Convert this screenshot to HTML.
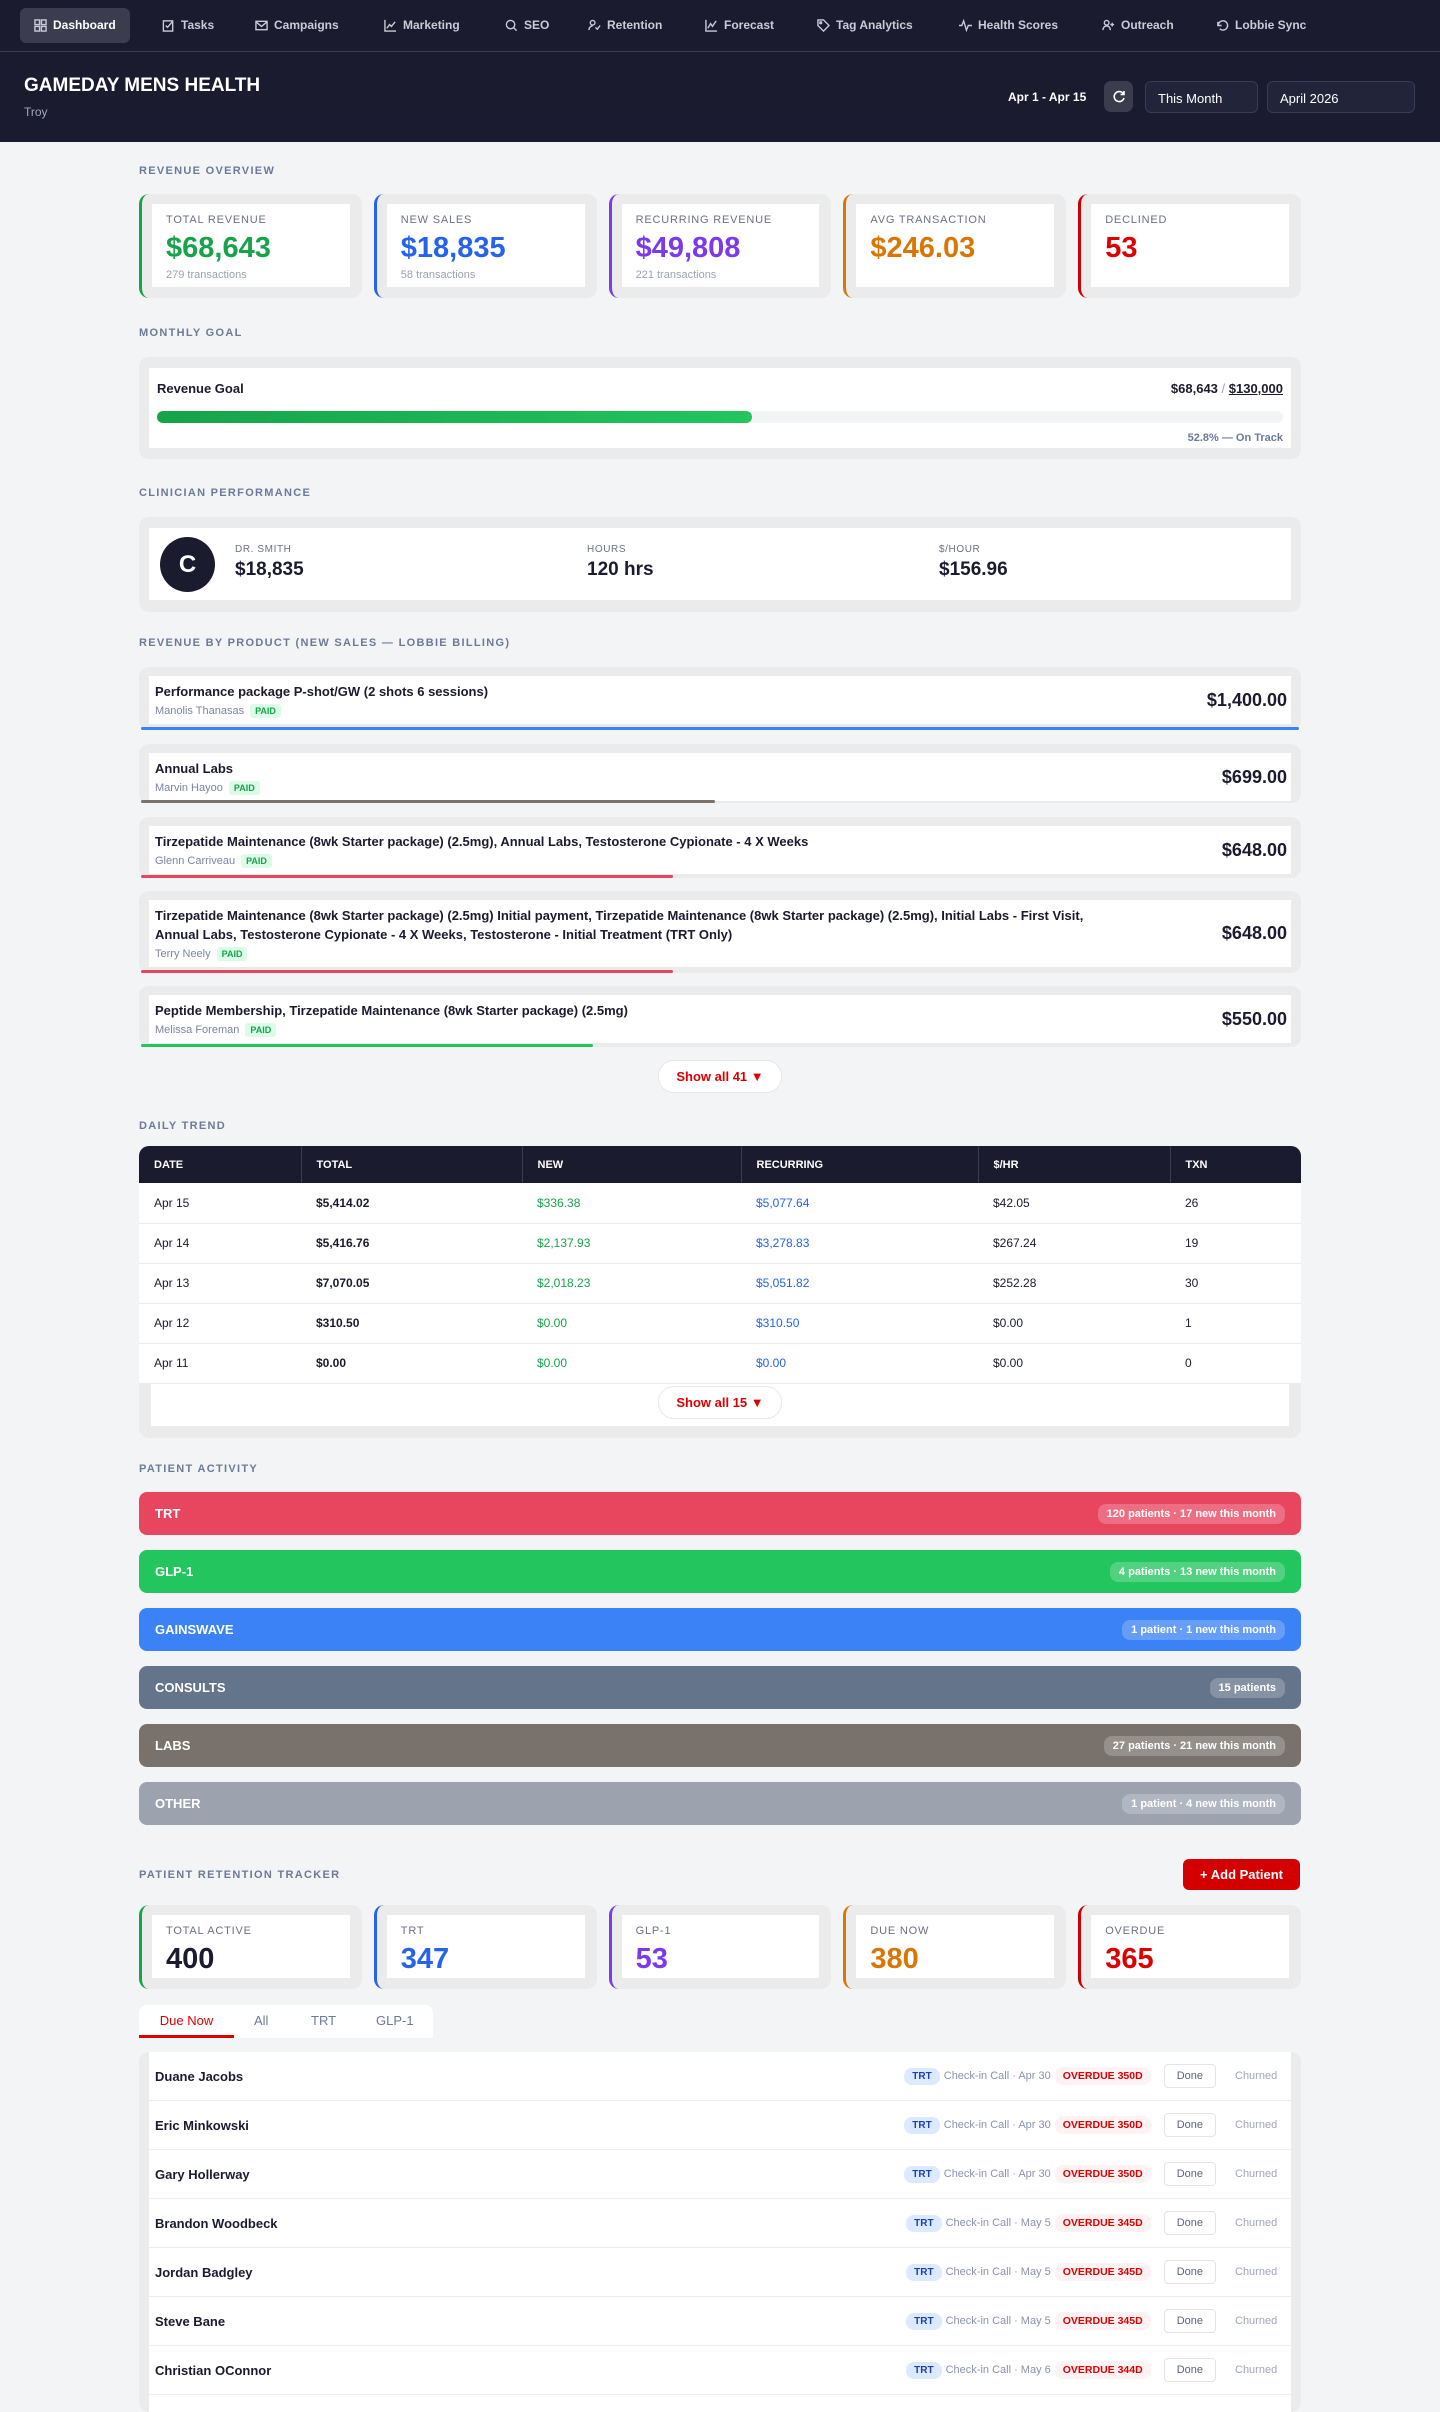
<!DOCTYPE html>
<html><head><meta charset="utf-8"><style>
*{box-sizing:border-box;margin:0;padding:0}
body{width:1440px;height:2400px;background:#f3f4f6;font-family:"Liberation Sans",Arial,sans-serif;color:#1a1b2e;position:relative;overflow:hidden}
.nav{position:absolute;left:0;top:0;width:1440px;height:52px;background:#1a1b2e;border-bottom:1px solid #3a3c50}
.ni{position:absolute;top:8px;height:35px;line-height:35px;font-size:12px;font-weight:bold;color:#c9cbd8;display:flex;align-items:center;gap:6px}
.ni svg{width:13px;height:13px;stroke:#c9cbd8;fill:none;stroke-width:1.5}
.ni.act{background:#3b3c4e;border-radius:6px;padding:0 14px;color:#fff}
.hdr{position:absolute;left:0;top:52px;width:1440px;height:90px;background:#1a1b2e}
.ttl{position:absolute;left:24px;top:23px;font-size:19px;font-weight:bold;color:#fff}
.sub{position:absolute;left:24px;top:53px;font-size:12px;color:#a3a6b8}
.lab{position:absolute;left:139px;font-size:11px;font-weight:bold;letter-spacing:1.3px;color:#6b7a99}
.sec{position:absolute;left:139px;width:1162px}
.card{background:#ebebeb;border-radius:10px;padding:10px 10px 10px 13px}
.in{background:#fff}
.stats{display:flex;gap:12px}
.st{flex:1;height:104px;background:#ebebeb;border-radius:10px;border-left:3px solid;padding:10px 12px 11px 10px}
.st .in{height:83px;padding:10px 14px}
.st .l{font-size:11px;color:#6b7280;letter-spacing:.8px;font-weight:500}
.st .v{font-size:29px;font-weight:bold;margin-top:6px;line-height:32px}
.st .s{font-size:11px;color:#9ca3af;margin-top:5px}
.prow{position:absolute;left:0;width:1162px;background:#ebebeb;border-radius:10px;padding:9px 10px 10px 10px}
.prow .in{display:flex;justify-content:space-between;align-items:center;padding:6px 4px 6px 6px}
.pt{font-size:13px;font-weight:bold;line-height:19px}
.pn{font-size:11px;color:#7c86a2;margin-top:3px}
.paid{display:inline-block;background:#dcfce7;color:#16a34a;font-size:9px;font-weight:bold;padding:2px 5px;border-radius:3px;margin-left:6px}
.pp{font-size:18px;font-weight:bold}
.pbar{position:absolute;left:2px;bottom:0;height:3px;border-radius:2px}
.btn{position:absolute;background:#fff;border-radius:16px;color:#d00;font-size:13px;font-weight:bold;text-align:center;border:1px solid #e5e7eb}
table{border-collapse:collapse;width:100%}
th{background:#1a1b2e;color:#fff;font-size:11px;text-align:left;height:37px;padding-left:15px;border-left:1px solid #3a3c50}
td{height:40px;font-size:12px;padding-left:15px;background:#fff;border-bottom:1px solid #ececec}
.pa{position:absolute;left:139px;width:1162px;height:43px;border-radius:8px;color:#fff;font-size:13px;font-weight:bold;padding:0 16px;display:flex;justify-content:space-between;align-items:center}
.pa span{background:rgba(255,255,255,.22);font-size:11px;padding:4px 9px;border-radius:8px;font-weight:bold}
.lr{height:49px;border-bottom:1px solid #ececec;display:flex;align-items:center;justify-content:space-between;padding:0 8px 0 6px;background:#fff}
.lr .n{font-size:13px;font-weight:bold}
.rt{display:flex;align-items:center;font-size:11px;color:#8a93ad}
.trt{background:#dbeafe;color:#1e40af;font-weight:bold;font-size:10px;padding:3px 8px;border-radius:8px;margin-right:4px}
.ov{background:#fef2f2;color:#dc0000;font-weight:bold;font-size:10.5px;padding:3px 8px;border-radius:8px;margin-left:4px}
.dn{border:1px solid #e2e4ea;border-radius:4px;padding:5px 12px;color:#5a6480;margin-left:13px;font-size:11px}
.ch{color:#a0a6b8;margin-left:19px;width:48px}
</style></head><body>
<div class="nav">
<div class="ni act" style="left:20px"><svg viewBox="0 0 14 14"><rect x="1" y="1" width="5" height="5"/><rect x="8" y="1" width="5" height="5"/><rect x="1" y="8" width="5" height="5"/><rect x="8" y="8" width="5" height="5"/></svg>Dashboard</div>
<div class="ni" style="left:162px"><svg viewBox="0 0 14 14"><rect x="1.5" y="2" width="10" height="11"/><path d="M4 7l2 2 5-6"/></svg>Tasks</div>
<div class="ni" style="left:255px"><svg viewBox="0 0 14 14"><rect x="1" y="2.5" width="12" height="9"/><path d="M1 3l6 5 6-5"/></svg>Campaigns</div>
<div class="ni" style="left:384px"><svg viewBox="0 0 14 14"><path d="M1 1v12h12M3 10l3-4 2 2 4-5"/></svg>Marketing</div>
<div class="ni" style="left:505px"><svg viewBox="0 0 14 14"><circle cx="6" cy="6" r="4.5"/><path d="M9.5 9.5l3 3"/></svg>SEO</div>
<div class="ni" style="left:588px"><svg viewBox="0 0 14 14"><circle cx="5" cy="4" r="2.5"/><path d="M1 12c0-3 2-4.5 4-4.5M8 9l2 2 3-4"/></svg>Retention</div>
<div class="ni" style="left:705px"><svg viewBox="0 0 14 14"><path d="M1 1v12h12M3 10l3-5 2 3 4-6"/></svg>Forecast</div>
<div class="ni" style="left:817px"><svg viewBox="0 0 14 14"><path d="M1 1h6l6 6-6 6-6-6z"/><circle cx="4" cy="4" r="1"/></svg>Tag Analytics</div>
<div class="ni" style="left:959px"><svg viewBox="0 0 14 14"><path d="M0 7h3l2-5 3 10 2-5h4"/></svg>Health Scores</div>
<div class="ni" style="left:1102px"><svg viewBox="0 0 14 14"><circle cx="5" cy="4" r="2.5"/><path d="M1 12c0-3 2-4.5 4-4.5s4 1.5 4 4.5M11 4v4M9 6h4"/></svg>Outreach</div>
<div class="ni" style="left:1216px"><svg viewBox="0 0 14 14"><path d="M2 3v4h4M2.5 7A5 5 0 1 1 4 10.5"/></svg>Lobbie Sync</div>
</div>
<div class="hdr">
<div class="ttl">GAMEDAY MENS HEALTH</div>
<div class="sub">Troy</div>
<div style="position:absolute;left:1008px;top:38px;font-size:12px;font-weight:bold;color:#fff">Apr 1 - Apr 15</div>
<div style="position:absolute;left:1104px;top:29px;width:29px;height:31px;background:#3b3c4e;border-radius:7px;display:flex;align-items:center;justify-content:center"><svg width="14" height="14" viewBox="0 0 14 14" fill="none" stroke="#fff" stroke-width="1.6"><path d="M11.5 4A5 5 0 1 0 12 8M12 1v3.5H8.5"/></svg></div>
<div style="position:absolute;left:1145px;top:29px;width:113px;height:32px;background:#22243a;border:1px solid #3a3c55;border-radius:6px;color:#fff;font-size:13px;padding:9px 12px">This Month</div>
<div style="position:absolute;left:1267px;top:29px;width:148px;height:32px;background:#22243a;border:1px solid #3a3c55;border-radius:6px;color:#fff;font-size:13px;padding:9px 12px">April 2026</div>
</div>

<div class="lab" style="top:165px">REVENUE OVERVIEW</div>
<div class="sec stats" style="top:194px">
<div class="st" style="border-color:#16a34a"><div class="in"><div class="l">TOTAL REVENUE</div><div class="v" style="color:#16a34a">$68,643</div><div class="s">279 transactions</div></div></div>
<div class="st" style="border-color:#2563eb"><div class="in"><div class="l">NEW SALES</div><div class="v" style="color:#2563eb">$18,835</div><div class="s">58 transactions</div></div></div>
<div class="st" style="border-color:#7c3aed"><div class="in"><div class="l">RECURRING REVENUE</div><div class="v" style="color:#7c3aed">$49,808</div><div class="s">221 transactions</div></div></div>
<div class="st" style="border-color:#d97706"><div class="in"><div class="l">AVG TRANSACTION</div><div class="v" style="color:#d97706">$246.03</div></div></div>
<div class="st" style="border-color:#c00"><div class="in"><div class="l">DECLINED</div><div class="v" style="color:#d00">53</div></div></div>
</div>

<div class="lab" style="top:327px">MONTHLY GOAL</div>
<div class="sec card" style="top:357px;height:102px;padding:11px 10px"><div class="in" style="height:80px;padding:13px 8px;position:relative">
<div style="font-size:13px;font-weight:bold;display:flex;justify-content:space-between"><span>Revenue Goal</span><span>$68,643 <span style="color:#9ca3af;font-weight:normal">/</span> <u>$130,000</u></span></div>
<div style="margin-top:15px;height:12px;background:#f3f4f6;border-radius:6px"><div style="width:52.8%;height:12px;border-radius:6px;background:linear-gradient(90deg,#16a34a,#22c55e)"></div></div>
<div style="text-align:right;font-size:11px;color:#6b7a99;margin-top:9px;font-weight:bold">52.8% — On Track</div>
</div></div>

<div class="lab" style="top:487px">CLINICIAN PERFORMANCE</div>
<div class="sec card" style="top:517px;height:95px;padding:11px 10px"><div class="in" style="height:72px;position:relative">
<div style="position:absolute;left:11px;top:9px;width:55px;height:55px;border-radius:50%;background:#1a1b2e;color:#fff;font-size:24px;font-weight:bold;text-align:center;line-height:55px">C</div>
<div style="position:absolute;left:86px;top:16px"><div style="font-size:10px;color:#6b7280;letter-spacing:.6px">DR. SMITH</div><div style="font-size:19px;font-weight:bold;margin-top:4px">$18,835</div></div>
<div style="position:absolute;left:438px;top:16px"><div style="font-size:10px;color:#6b7280;letter-spacing:.6px">HOURS</div><div style="font-size:19px;font-weight:bold;margin-top:4px">120 hrs</div></div>
<div style="position:absolute;left:790px;top:16px"><div style="font-size:10px;color:#6b7280;letter-spacing:.6px">$/HOUR</div><div style="font-size:19px;font-weight:bold;margin-top:4px">$156.96</div></div>
</div></div>

<div class="lab" style="top:637px">REVENUE BY PRODUCT (NEW SALES — LOBBIE BILLING)</div>
<div class="sec" style="top:667px;height:400px">
<div class="prow" style="top:0;height:63px"><div class="in"><div><div class="pt">Performance package P-shot/GW (2 shots 6 sessions)</div><div class="pn">Manolis Thanasas<span class="paid">PAID</span></div></div><div class="pp">$1,400.00</div></div><div class="pbar" style="width:1158px;background:#3b82f6"></div></div>
<div class="prow" style="top:77px;height:59px"><div class="in"><div><div class="pt">Annual Labs</div><div class="pn">Marvin Hayoo<span class="paid">PAID</span></div></div><div class="pp">$699.00</div></div><div class="pbar" style="width:574px;background:#78716c"></div></div>
<div class="prow" style="top:150px;height:61px"><div class="in"><div><div class="pt">Tirzepatide Maintenance (8wk Starter package) (2.5mg), Annual Labs, Testosterone Cypionate - 4 X Weeks</div><div class="pn">Glenn Carriveau<span class="paid">PAID</span></div></div><div class="pp">$648.00</div></div><div class="pbar" style="width:532px;background:#e8465f"></div></div>
<div class="prow" style="top:224px;height:82px"><div class="in"><div><div class="pt">Tirzepatide Maintenance (8wk Starter package) (2.5mg) Initial payment, Tirzepatide Maintenance (8wk Starter package) (2.5mg), Initial Labs - First Visit,<br>Annual Labs, Testosterone Cypionate - 4 X Weeks, Testosterone - Initial Treatment (TRT Only)</div><div class="pn">Terry Neely<span class="paid">PAID</span></div></div><div class="pp">$648.00</div></div><div class="pbar" style="width:532px;background:#e8465f"></div></div>
<div class="prow" style="top:319px;height:61px"><div class="in"><div><div class="pt">Peptide Membership, Tirzepatide Maintenance (8wk Starter package) (2.5mg)</div><div class="pn">Melissa Foreman<span class="paid">PAID</span></div></div><div class="pp">$550.00</div></div><div class="pbar" style="width:452px;background:#22c55e"></div></div>
</div>
<div class="btn" style="left:658px;top:1060px;width:124px;height:33px;line-height:31px">Show all 41 ▼</div>

<div class="lab" style="top:1120px">DAILY TREND</div>
<div class="sec" style="top:1146px;height:292px;background:#ebebeb;border-radius:10px;overflow:hidden">
<table>
<tr><th style="width:162px;border-left:none">DATE</th><th style="width:221px">TOTAL</th><th style="width:219px">NEW</th><th style="width:237px">RECURRING</th><th style="width:192px">$/HR</th><th>TXN</th></tr>
<tr><td>Apr 15</td><td><b>$5,414.02</b></td><td style="color:#16a34a">$336.38</td><td style="color:#2563eb">$5,077.64</td><td>$42.05</td><td>26</td></tr>
<tr><td>Apr 14</td><td><b>$5,416.76</b></td><td style="color:#16a34a">$2,137.93</td><td style="color:#2563eb">$3,278.83</td><td>$267.24</td><td>19</td></tr>
<tr><td>Apr 13</td><td><b>$7,070.05</b></td><td style="color:#16a34a">$2,018.23</td><td style="color:#2563eb">$5,051.82</td><td>$252.28</td><td>30</td></tr>
<tr><td>Apr 12</td><td><b>$310.50</b></td><td style="color:#16a34a">$0.00</td><td style="color:#2563eb">$310.50</td><td>$0.00</td><td>1</td></tr>
<tr><td>Apr 11</td><td><b>$0.00</b></td><td style="color:#16a34a">$0.00</td><td style="color:#2563eb">$0.00</td><td>$0.00</td><td>0</td></tr>
</table>
<div style="margin:0 12px;height:42px;background:#fff;position:relative"><div class="btn" style="left:507px;top:2px;width:124px;height:33px;line-height:31px">Show all 15 ▼</div></div>
</div>

<div class="lab" style="top:1463px">PATIENT ACTIVITY</div>
<div class="pa" style="top:1492px;background:#e8465f">TRT<span>120 patients · 17 new this month</span></div>
<div class="pa" style="top:1550px;background:#22c55e">GLP-1<span>4 patients · 13 new this month</span></div>
<div class="pa" style="top:1608px;background:#3b82f6">GAINSWAVE<span>1 patient · 1 new this month</span></div>
<div class="pa" style="top:1666px;background:#64748b">CONSULTS<span>15 patients</span></div>
<div class="pa" style="top:1724px;background:#78716c">LABS<span>27 patients · 21 new this month</span></div>
<div class="pa" style="top:1782px;background:#9ca3af">OTHER<span>1 patient · 4 new this month</span></div>

<div class="lab" style="top:1869px">PATIENT RETENTION TRACKER</div>
<div style="position:absolute;left:1183px;top:1859px;width:117px;height:31px;background:#d40000;border-radius:6px;color:#fff;font-size:13px;font-weight:bold;text-align:center;line-height:31px">+ Add Patient</div>
<div class="sec stats" style="top:1905px">
<div class="st" style="height:84px;border-color:#16a34a"><div class="in" style="height:63px"><div class="l">TOTAL ACTIVE</div><div class="v">400</div></div></div>
<div class="st" style="height:84px;border-color:#2563eb"><div class="in" style="height:63px"><div class="l">TRT</div><div class="v" style="color:#2563eb">347</div></div></div>
<div class="st" style="height:84px;border-color:#7c3aed"><div class="in" style="height:63px"><div class="l">GLP-1</div><div class="v" style="color:#7c3aed">53</div></div></div>
<div class="st" style="height:84px;border-color:#d97706"><div class="in" style="height:63px"><div class="l">DUE NOW</div><div class="v" style="color:#d97706">380</div></div></div>
<div class="st" style="height:84px;border-color:#c00"><div class="in" style="height:63px"><div class="l">OVERDUE</div><div class="v" style="color:#d00">365</div></div></div>
</div>

<div style="position:absolute;left:139px;top:2005px;width:294px;height:33px;background:#fff;border-radius:8px 8px 0 0;font-size:13px;color:#6b7a99">
<div style="position:absolute;left:0;width:95px;height:33px;text-align:center;line-height:31px;color:#d00;border-bottom:3px solid #d00">Due Now</div>
<div style="position:absolute;left:115px;line-height:31px">All</div>
<div style="position:absolute;left:172px;line-height:31px">TRT</div>
<div style="position:absolute;left:237px;line-height:31px">GLP-1</div>
</div>

<div class="sec" style="top:2052px;height:360px;background:#ebebeb;border-radius:10px;padding:0 10px 0 10px;overflow:hidden">
<div style="background:#fff;margin-top:0">
<div class="lr"><span class="n">Duane Jacobs</span><div class="rt"><span class="trt">TRT</span>Check-in Call · Apr 30<span class="ov">OVERDUE 350D</span><span class="dn">Done</span><span class="ch">Churned</span></div></div>
<div class="lr"><span class="n">Eric Minkowski</span><div class="rt"><span class="trt">TRT</span>Check-in Call · Apr 30<span class="ov">OVERDUE 350D</span><span class="dn">Done</span><span class="ch">Churned</span></div></div>
<div class="lr"><span class="n">Gary Hollerway</span><div class="rt"><span class="trt">TRT</span>Check-in Call · Apr 30<span class="ov">OVERDUE 350D</span><span class="dn">Done</span><span class="ch">Churned</span></div></div>
<div class="lr"><span class="n">Brandon Woodbeck</span><div class="rt"><span class="trt">TRT</span>Check-in Call · May 5<span class="ov">OVERDUE 345D</span><span class="dn">Done</span><span class="ch">Churned</span></div></div>
<div class="lr"><span class="n">Jordan Badgley</span><div class="rt"><span class="trt">TRT</span>Check-in Call · May 5<span class="ov">OVERDUE 345D</span><span class="dn">Done</span><span class="ch">Churned</span></div></div>
<div class="lr"><span class="n">Steve Bane</span><div class="rt"><span class="trt">TRT</span>Check-in Call · May 5<span class="ov">OVERDUE 345D</span><span class="dn">Done</span><span class="ch">Churned</span></div></div>
<div class="lr"><span class="n">Christian OConnor</span><div class="rt"><span class="trt">TRT</span>Check-in Call · May 6<span class="ov">OVERDUE 344D</span><span class="dn">Done</span><span class="ch">Churned</span></div></div>
<div class="lr"></div>
</div></div>
</body></html>
